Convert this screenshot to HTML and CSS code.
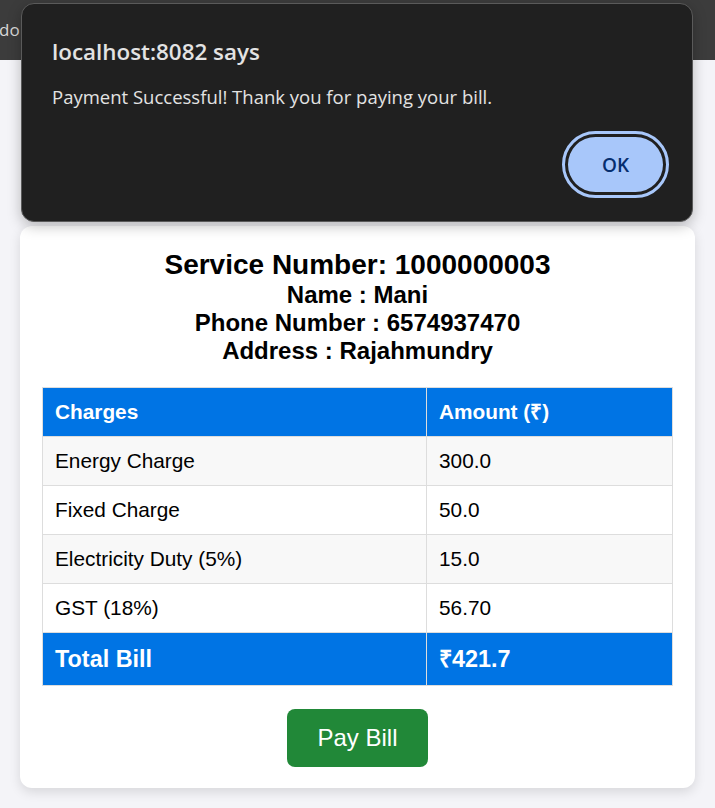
FILE: index.html
```html
<!DOCTYPE html>
<html lang="en">
<head>
<meta charset="utf-8">
<title>Bill</title>
<link rel="stylesheet" href="styles.css">
</head>
<body>
<div class="topbar"><span class="tab-text">do</span></div>
<main class="page">
  <section class="card">
    <div class="info">
      <div class="service">Service Number: 1000000003</div>
      <div class="line">Name : Mani</div>
      <div class="line">Phone Number : 6574937470</div>
      <div class="line">Address : Rajahmundry</div>
    </div>
    <table class="bill">
      <thead>
        <tr><th class="col-charge">Charges</th><th>Amount (₹)</th></tr>
      </thead>
      <tbody>
        <tr class="alt"><td>Energy Charge</td><td>300.0</td></tr>
        <tr><td>Fixed Charge</td><td>50.0</td></tr>
        <tr class="alt"><td>Electricity Duty (5%)</td><td>15.0</td></tr>
        <tr><td>GST (18%)</td><td>56.70</td></tr>
        <tr class="total"><td>Total Bill</td><td>₹421.7</td></tr>
      </tbody>
    </table>
    <div class="actions"><button class="pay" type="button">Pay Bill</button></div>
  </section>
</main>
<div class="dialog" role="alertdialog">
  <div class="dialog-title">localhost:8082 says</div>
  <div class="dialog-msg">Payment Successful! Thank you for paying your bill.</div>
  <div class="dialog-actions"><button class="ok" type="button">OK</button></div>
</div>
</body>
</html>
```
FILE: styles.css
```css
html, body {
  margin: 0;
  padding: 0;
}
body {
  background: #f4f4f8;
  font-family: "Liberation Sans", Arial, sans-serif;
  color: #000;
  height: 808px;
  overflow: hidden;
}
.topbar {
  height: 60px;
  background: #3c3c3c;
  display: flex;
  align-items: center;
}
.tab-text {
  font-family: "Open Sans", "Noto Sans", sans-serif;
  font-size: 17px;
  color: #d8d8d8;
  margin-left: -1px;
  margin-top: -2px;
}
.page {
  padding: 166px 20px 0;
}
.card {
  background: #fff;
  border-radius: 12px;
  padding: 22px 22px 21px;
  box-shadow: 0 4px 12px rgba(0, 0, 0, 0.12);
}
.info {
  text-align: center;
  font-weight: bold;
}
.service {
  font-size: 28px;
  line-height: 32px;
  padding-top: 1px;
}
.line {
  font-size: 24px;
  line-height: 28px;
}
.bill {
  width: 100%;
  margin-top: 22px;
  border-collapse: collapse;
  font-size: 20.8px;
}
.bill th, .bill td {
  border: 1px solid #ddd;
  padding: 12px;
  line-height: 24px;
  text-align: left;
}
.bill th {
  background: #0074e4;
  color: #fff;
  font-weight: bold;
}
.col-charge {
  width: 359px;
}
.bill .alt td {
  background: #f8f8f8;
}
.bill .total td {
  background: #0074e4;
  color: #fff;
  font-weight: bold;
  font-size: 23.4px;
  line-height: 28px;
}
.actions {
  display: flex;
  justify-content: center;
  margin-top: 23px;
}
.pay {
  background: #218838;
  color: #fff;
  border: none;
  border-radius: 8px;
  font-family: "Liberation Sans", Arial, sans-serif;
  font-size: 24px;
  line-height: 28px;
  padding: 15px 30px;
}
.dialog {
  position: absolute;
  top: 3px;
  left: 21px;
  width: 672px;
  height: 219px;
  box-sizing: border-box;
  background: #202020;
  border: 1px solid #5a5a5a;
  border-radius: 13px;
  box-shadow: 0 4px 14px rgba(0, 0, 0, 0.25);
  padding: 34px 29px 0 30px;
  font-family: "Open Sans", "Noto Sans", sans-serif;
  color: #e3e3e3;
}
.dialog-title {
  font-size: 22.4px;
  font-weight: 600;
  line-height: 28px;
}
.dialog-msg {
  font-size: 18.5px;
  line-height: 24px;
  margin-top: 19px;
}
.dialog-actions {
  display: flex;
  justify-content: flex-end;
  margin-top: 28px;
}
.ok {
  width: 95px;
  height: 55px;
  border: none;
  border-radius: 28px;
  background: #a8c7fa;
  color: #062e6f;
  font-family: "Open Sans", "Noto Sans", sans-serif;
  font-size: 19px;
  font-weight: 600;
  outline: 3px solid #a8c7fa;
  outline-offset: 3px;
}
```
